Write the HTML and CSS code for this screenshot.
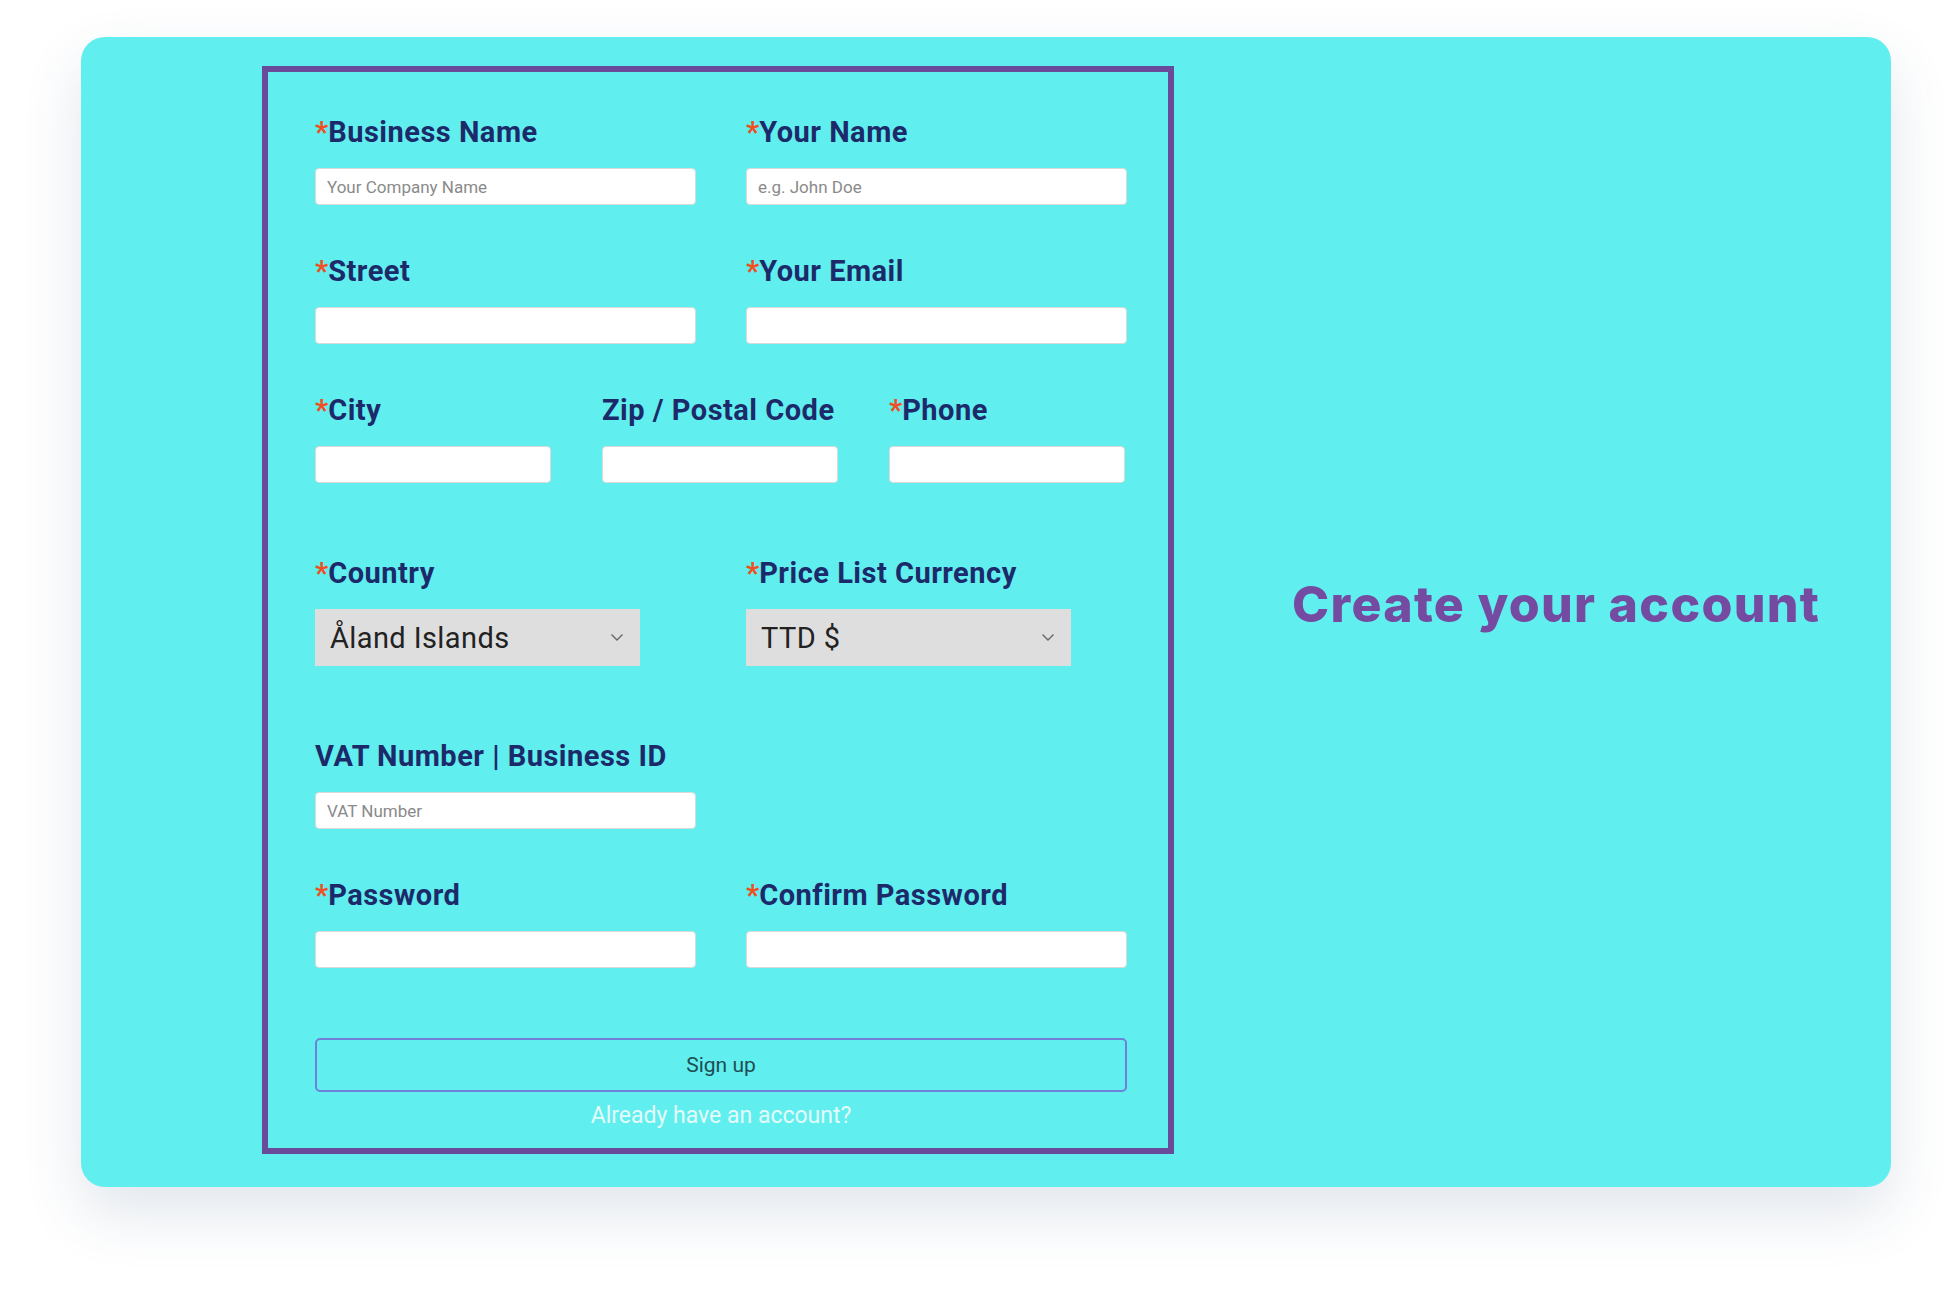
FILE: index.html
```html
<!DOCTYPE html>
<html lang="en">
<head>
<meta charset="utf-8">
<title>Create your account</title>
<link rel="stylesheet" href="styles.css">
</head>
<body>
<main class="page">
  <section class="card">
    <form class="signup">
      <div class="row">
        <div class="field">
          <label class="label"><span class="req">*</span>Business Name</label>
          <input class="input" type="text" placeholder="Your Company Name">
        </div>
        <div class="field">
          <label class="label"><span class="req">*</span>Your Name</label>
          <input class="input" type="text" placeholder="e.g. John Doe">
        </div>
      </div>
      <div class="row">
        <div class="field">
          <label class="label"><span class="req">*</span>Street</label>
          <input class="input" type="text">
        </div>
        <div class="field">
          <label class="label"><span class="req">*</span>Your Email</label>
          <input class="input" type="email">
        </div>
      </div>
      <div class="row row-3 row-lg">
        <div class="field">
          <label class="label"><span class="req">*</span>City</label>
          <input class="input" type="text">
        </div>
        <div class="field">
          <label class="label">Zip / Postal Code</label>
          <input class="input" type="text">
        </div>
        <div class="field">
          <label class="label"><span class="req">*</span>Phone</label>
          <input class="input" type="tel">
        </div>
      </div>
      <div class="row row-lg">
        <div class="field">
          <label class="label"><span class="req">*</span>Country</label>
          <div class="select">
            <span>Åland Islands</span>
            <svg class="chev" width="14" height="9" viewBox="0 0 14 9"><path d="M1.5 1.5 L7 7 L12.5 1.5" fill="none" stroke="#666" stroke-width="1.4"/></svg>
          </div>
        </div>
        <div class="field">
          <label class="label"><span class="req">*</span>Price List Currency</label>
          <div class="select">
            <span>TTD $</span>
            <svg class="chev" width="14" height="9" viewBox="0 0 14 9"><path d="M1.5 1.5 L7 7 L12.5 1.5" fill="none" stroke="#666" stroke-width="1.4"/></svg>
          </div>
        </div>
      </div>
      <div class="row">
        <div class="field">
          <label class="label">VAT Number | Business ID</label>
          <input class="input" type="text" placeholder="VAT Number">
        </div>
      </div>
      <div class="row row-last">
        <div class="field">
          <label class="label"><span class="req">*</span>Password</label>
          <input class="input" type="password">
        </div>
        <div class="field">
          <label class="label"><span class="req">*</span>Confirm Password</label>
          <input class="input" type="password">
        </div>
      </div>
      <button class="btn" type="button">Sign up</button>
      <a class="login" href="#">Already have an account?</a>
    </form>
    <h1 class="hero">Create your account</h1>
  </section>
</main>
</body>
</html>
```
FILE: styles.css
```css
* { box-sizing: border-box; }
html, body { margin: 0; background: #ffffff; }
body {
  width: 1960px;
  height: 1300px;
  overflow: hidden;
  font-family: Roboto, "Liberation Sans", sans-serif;
}
.page { padding: 37px 0 0 81px; }
.card {
  width: 1810px;
  height: 1150px;
  background: #61eeee;
  border-radius: 24px;
  box-shadow: 0 26px 60px rgba(45, 75, 120, 0.14);
  display: flex;
  align-items: flex-start;
}
.signup {
  margin: 29px 0 0 181px;
  width: 912px;
  height: 1088px;
  border: 6px solid #6a4b9a;
  padding: 43px 41px 0 47px;
  display: flex;
  flex-direction: column;
  flex-shrink: 0;
}
.row {
  display: grid;
  grid-template-columns: 381px 381px;
  column-gap: 50px;
  margin-bottom: 49px;
}
.row-3 { grid-template-columns: 236px 236px 236px; column-gap: 51px; }
.row-lg { margin-bottom: 73px; }
.row-last { margin-bottom: 70px; }
.field { display: flex; flex-direction: column; }
.label {
  font-weight: 700;
  font-size: 29px;
  letter-spacing: 0.5px;
  line-height: 34px;
  color: #1c2a6a;
  margin-bottom: 19px;
  white-space: nowrap;
}
.req { color: #f04e23; letter-spacing: 0; }
.input {
  height: 37px;
  border: 1px solid #d9d9d9;
  border-radius: 4px;
  background: #ffffff;
  padding: 0 11px;
  font-family: Roboto, "Liberation Sans", sans-serif;
  font-size: 17px;
  color: #333333;
  outline: none;
}
.input::placeholder { color: #8a8a8a; }
.select {
  width: 325px;
  height: 57px;
  background: #dedede;
  display: flex;
  align-items: center;
  justify-content: space-between;
  padding: 0 16px 0 15px;
  font-size: 29px;
  letter-spacing: 0.4px;
  color: #222222;
}
.btn {
  width: 812px;
  height: 54px;
  border: 2px solid #6f80d8;
  border-radius: 5px;
  background: transparent;
  font-family: Roboto, "Liberation Sans", sans-serif;
  font-size: 21px;
  color: #1f4d52;
  cursor: pointer;
}
.login {
  margin-top: 9px;
  line-height: 30px;
  text-align: center;
  font-size: 23px;
  color: #e3fbfb;
  text-decoration: none;
}
.hero {
  margin: 0 0 16px 118px;
  align-self: center;
  font-family: Inter, "Noto Sans", sans-serif;
  font-weight: 800;
  font-size: 50px;
  letter-spacing: 1.3px;
  color: #744ba0;
  white-space: nowrap;
}
```
